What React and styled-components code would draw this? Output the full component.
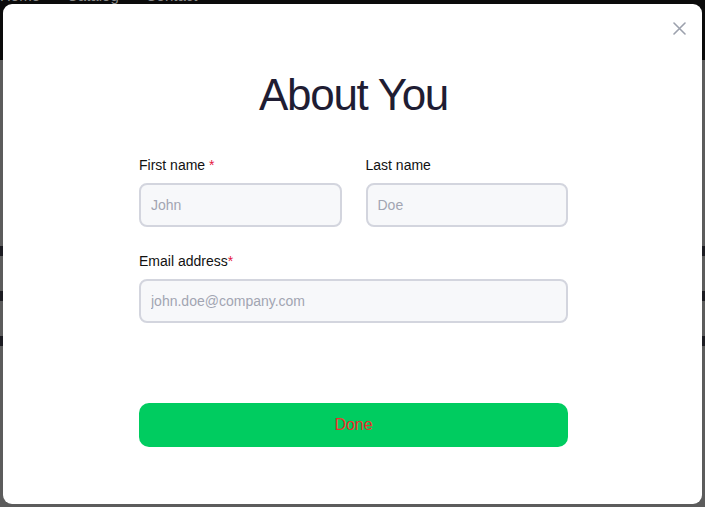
import React from "react";
import styled, { createGlobalStyle } from "styled-components";

const Global = createGlobalStyle`
  html, body { margin: 0; padding: 0; }
  body {
    font-family: "Liberation Sans", Arial, sans-serif;
    background: #5c5c5c;
    overflow: hidden;
  }
  #root { width: 705px; height: 507px; position: relative; overflow: hidden; }
`;

const Page = styled.div`
  width: 705px;
  height: 507px;
  display: flex;
  flex-direction: column;
  background: #5c5c5c;
`;

const Header = styled.header`
  height: 60px;
  flex: none;
  background: #0b0b0b;
  overflow: hidden;
`;

const NavList = styled.nav`
  display: flex;
  gap: 27px;
  margin-top: -13px;
  padding-left: 0;
  font-size: 15px;
  line-height: 18px;
  color: #8a8a8a;
`;

const NavLink = styled.span``;

const Content = styled.main`
  flex: 1;
  display: flex;
  flex-direction: column;
  padding-top: 186px;
  gap: 35px;
`;

const Stripe = styled.div`
  height: 10px;
  background: #1c1c22;
`;

const Backdrop = styled.div`
  position: absolute;
  inset: 0;
`;

const Modal = styled.div`
  position: absolute;
  top: 4px;
  left: 3px;
  width: 699px;
  height: 500px;
  background: #ffffff;
  border-radius: 9px;
  box-sizing: border-box;
  padding-top: 67px;
  padding-left: 2px;
  display: flex;
  flex-direction: column;
  align-items: center;
`;

const CloseButton = styled.button`
  position: absolute;
  top: 14px;
  right: 13px;
  width: 20px;
  height: 20px;
  padding: 0;
  border: none;
  background: transparent;
  display: flex;
  align-items: center;
  justify-content: center;
  cursor: pointer;
`;

const Title = styled.h1`
  margin: 0;
  font-family: "Liberation Sans", Arial, sans-serif;
  font-weight: 400;
  font-size: 44px;
  line-height: 48px;
  letter-spacing: -1.3px;
  color: #1f1d33;
  text-align: center;
`;

const Form = styled.form`
  width: 429px;
  margin-top: 38px;
  display: flex;
  flex-direction: column;
`;

const Row = styled.div`
  display: grid;
  grid-template-columns: ${(p) => (p.$cols === 2 ? "1fr 1fr" : "1fr")};
  column-gap: 24px;
  margin-bottom: 26px;
`;

const Field = styled.label`
  display: flex;
  flex-direction: column;
  gap: 10px;
`;

const LabelText = styled.span`
  font-size: 14px;
  line-height: 16px;
  color: #111111;
`;

const Req = styled.span`
  color: #e5173f;
`;

const Input = styled.input`
  box-sizing: border-box;
  width: 100%;
  height: 44px;
  border: 2px solid #d3d5de;
  border-radius: 8px;
  background: #f7f8fa;
  padding: 0 10px;
  font-family: "Liberation Sans", Arial, sans-serif;
  font-size: 14px;
  color: #222;
  outline: none;
  &::placeholder {
    color: #a2a5b2;
  }
`;

const DoneButton = styled.button`
  margin-top: 54px;
  height: 44px;
  width: 100%;
  border: none;
  border-radius: 10px;
  background: #00cc60;
  color: #ef2b2b;
  font-family: "Liberation Sans", Arial, sans-serif;
  font-size: 16px;
  cursor: pointer;
`;

export default function App() {
  return (
    <>
      <Global />
      <Page>
        <Header>
          <NavList>
            <NavLink>Home</NavLink>
            <NavLink>Catalog</NavLink>
            <NavLink>Contact</NavLink>
          </NavList>
        </Header>
        <Content>
          <Stripe />
          <Stripe />
          <Stripe />
        </Content>
      </Page>
      <Backdrop>
        <Modal>
          <CloseButton aria-label="Close">
            <svg width="13" height="13" viewBox="0 0 13 13" fill="none">
              <path d="M1 1L12 12M12 1L1 12" stroke="#9ca1ad" strokeWidth="1.6" strokeLinecap="round" />
            </svg>
          </CloseButton>
          <Title>About You</Title>
          <Form onSubmit={(e) => e.preventDefault()}>
            <Row $cols={2}>
              <Field>
                <LabelText>
                  First name <Req>*</Req>
                </LabelText>
                <Input placeholder="John" />
              </Field>
              <Field>
                <LabelText>Last name</LabelText>
                <Input placeholder="Doe" />
              </Field>
            </Row>
            <Row $cols={1}>
              <Field>
                <LabelText>
                  Email address<Req>*</Req>
                </LabelText>
                <Input placeholder="john.doe@company.com" />
              </Field>
            </Row>
            <DoneButton type="submit">Done</DoneButton>
          </Form>
        </Modal>
      </Backdrop>
    </>
  );
}
